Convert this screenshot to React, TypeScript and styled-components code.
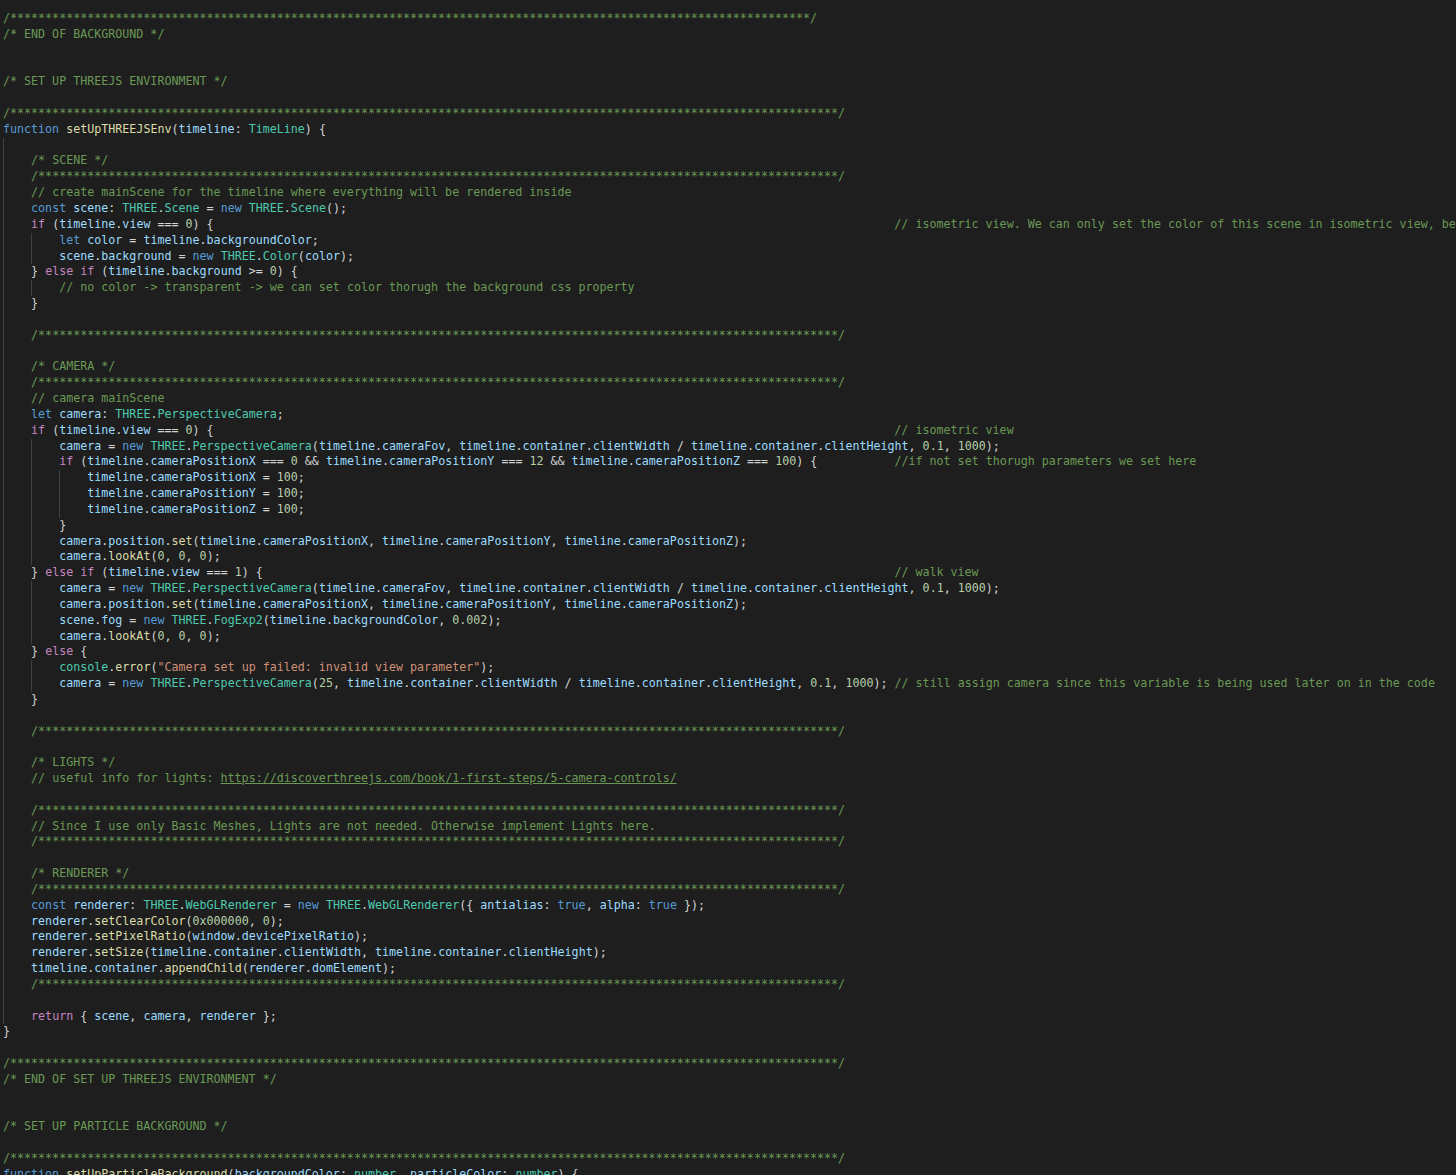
import { Fragment } from 'react';
import styled, { createGlobalStyle } from 'styled-components';

const GlobalStyle = createGlobalStyle`
  html, body {
    margin: 0;
    padding: 0;
    background: #1e1e1e;
  }
  body {
    overflow: hidden;
  }
`;

const colors: Record<string, string> = {
  c: '#6a9955',
  k: '#569cd6',
  f: '#c586c0',
  v: '#9cdcfe',
  m: '#dcdcaa',
  t: '#4ec9b0',
  n: '#b5cea8',
  s: '#ce9178',
};

const stars = (n: number) => '‹c|/' + '*'.repeat(n - 2) + '/›';
const COMMENT_COL = 127;

// each entry: guide depth, then the code. ‹x|text› picks a colour, ~ pads up to the side comments
const source: [number, string][] = [
  [0, stars(116)],
  [0, '‹c|/* END OF BACKGROUND */›'],
  [0, ''],
  [0, ''],
  [0, '‹c|/* SET UP THREEJS ENVIRONMENT */›'],
  [0, ''],
  [0, stars(120)],
  [0, '‹k|function› ‹m|setUpTHREEJSEnv›(‹v|timeline›: ‹t|TimeLine›) {'],
  [1, ''],
  [1, '‹c|/* SCENE */›'],
  [1, stars(116)],
  [1, '‹c|// create mainScene for the timeline where everything will be rendered inside›'],
  [1, '‹k|const› ‹v|scene›: ‹t|THREE›.‹t|Scene› = ‹k|new› ‹t|THREE›.‹t|Scene›();'],
  [1, '‹f|if› (‹v|timeline›.‹v|view› === ‹n|0›) {~‹c|// isometric view. We can only set the color of this scene in isometric view, because in walk view the background is a css property›'],
  [2, '‹k|let› ‹v|color› = ‹v|timeline›.‹v|backgroundColor›;'],
  [2, '‹v|scene›.‹v|background› = ‹k|new› ‹t|THREE›.‹t|Color›(‹v|color›);'],
  [1, '} ‹f|else› ‹f|if› (‹v|timeline›.‹v|background› >= ‹n|0›) {'],
  [2, '‹c|// no color -> transparent -> we can set color thorugh the background css property›'],
  [1, '}'],
  [1, ''],
  [1, stars(116)],
  [1, ''],
  [1, '‹c|/* CAMERA */›'],
  [1, stars(116)],
  [1, '‹c|// camera mainScene›'],
  [1, '‹k|let› ‹v|camera›: ‹t|THREE›.‹t|PerspectiveCamera›;'],
  [1, '‹f|if› (‹v|timeline›.‹v|view› === ‹n|0›) {~‹c|// isometric view›'],
  [2, '‹v|camera› = ‹k|new› ‹t|THREE›.‹t|PerspectiveCamera›(‹v|timeline›.‹v|cameraFov›, ‹v|timeline›.‹v|container›.‹v|clientWidth› / ‹v|timeline›.‹v|container›.‹v|clientHeight›, ‹n|0.1›, ‹n|1000›);'],
  [2, '‹f|if› (‹v|timeline›.‹v|cameraPositionX› === ‹n|0› && ‹v|timeline›.‹v|cameraPositionY› === ‹n|12› && ‹v|timeline›.‹v|cameraPositionZ› === ‹n|100›) {~‹c|//if not set thorugh parameters we set here›'],
  [3, '‹v|timeline›.‹v|cameraPositionX› = ‹n|100›;'],
  [3, '‹v|timeline›.‹v|cameraPositionY› = ‹n|100›;'],
  [3, '‹v|timeline›.‹v|cameraPositionZ› = ‹n|100›;'],
  [2, '}'],
  [2, '‹v|camera›.‹v|position›.‹m|set›(‹v|timeline›.‹v|cameraPositionX›, ‹v|timeline›.‹v|cameraPositionY›, ‹v|timeline›.‹v|cameraPositionZ›);'],
  [2, '‹v|camera›.‹m|lookAt›(‹n|0›, ‹n|0›, ‹n|0›);'],
  [1, '} ‹f|else› ‹f|if› (‹v|timeline›.‹v|view› === ‹n|1›) {~‹c|// walk view›'],
  [2, '‹v|camera› = ‹k|new› ‹t|THREE›.‹t|PerspectiveCamera›(‹v|timeline›.‹v|cameraFov›, ‹v|timeline›.‹v|container›.‹v|clientWidth› / ‹v|timeline›.‹v|container›.‹v|clientHeight›, ‹n|0.1›, ‹n|1000›);'],
  [2, '‹v|camera›.‹v|position›.‹m|set›(‹v|timeline›.‹v|cameraPositionX›, ‹v|timeline›.‹v|cameraPositionY›, ‹v|timeline›.‹v|cameraPositionZ›);'],
  [2, '‹v|scene›.‹v|fog› = ‹k|new› ‹t|THREE›.‹t|FogExp2›(‹v|timeline›.‹v|backgroundColor›, ‹n|0.002›);'],
  [2, '‹v|camera›.‹m|lookAt›(‹n|0›, ‹n|0›, ‹n|0›);'],
  [1, '} ‹f|else› {'],
  [2, '‹t|console›.‹m|error›(‹s|"Camera set up failed: invalid view parameter"›);'],
  [2, '‹v|camera› = ‹k|new› ‹t|THREE›.‹t|PerspectiveCamera›(‹n|25›, ‹v|timeline›.‹v|container›.‹v|clientWidth› / ‹v|timeline›.‹v|container›.‹v|clientHeight›, ‹n|0.1›, ‹n|1000›); ‹c|// still assign camera since this variable is being used later on in the code›'],
  [1, '}'],
  [1, ''],
  [1, stars(116)],
  [1, ''],
  [1, '‹c|/* LIGHTS */›'],
  [1, '‹c|// useful info for lights: ›‹u|https://discoverthreejs.com/book/1-first-steps/5-camera-controls/›'],
  [1, ''],
  [1, stars(116)],
  [1, '‹c|// Since I use only Basic Meshes, Lights are not needed. Otherwise implement Lights here.›'],
  [1, stars(116)],
  [1, ''],
  [1, '‹c|/* RENDERER */›'],
  [1, stars(116)],
  [1, '‹k|const› ‹v|renderer›: ‹t|THREE›.‹t|WebGLRenderer› = ‹k|new› ‹t|THREE›.‹t|WebGLRenderer›({ ‹v|antialias›: ‹k|true›, ‹v|alpha›: ‹k|true› });'],
  [1, '‹v|renderer›.‹m|setClearColor›(‹n|0x000000›, ‹n|0›);'],
  [1, '‹v|renderer›.‹m|setPixelRatio›(‹v|window›.‹v|devicePixelRatio›);'],
  [1, '‹v|renderer›.‹m|setSize›(‹v|timeline›.‹v|container›.‹v|clientWidth›, ‹v|timeline›.‹v|container›.‹v|clientHeight›);'],
  [1, '‹v|timeline›.‹v|container›.‹m|appendChild›(‹v|renderer›.‹v|domElement›);'],
  [1, stars(116)],
  [1, ''],
  [1, '‹f|return› { ‹v|scene›, ‹v|camera›, ‹v|renderer› };'],
  [0, '}'],
  [0, ''],
  [0, stars(120)],
  [0, '‹c|/* END OF SET UP THREEJS ENVIRONMENT */›'],
  [0, ''],
  [0, ''],
  [0, '‹c|/* SET UP PARTICLE BACKGROUND */›'],
  [0, ''],
  [0, stars(120)],
  [0, '‹k|function› ‹m|setUpParticleBackground›(‹v|backgroundColor›: ‹t|number›, ‹v|particleColor›: ‹t|number›) {'],
];

const Editor = styled.div`
  height: 1175px;
  overflow: hidden;
  padding: 10.97px 0 0 3px;
  box-sizing: border-box;
  background: #1e1e1e;
  color: #d4d4d4;
  font-family: "DejaVu Sans Mono", monospace;
  font-size: 11.67px;
  line-height: 15.84px;
`;

const Line = styled.div`
  display: flex;
  height: 15.83px;
  white-space: pre;

  &:nth-child(2n) {
    height: 15.85px;
  }
`;

const Guide = styled.span`
  flex: none;
  width: 28.08px;
  box-sizing: border-box;
  border-left: 1px solid #404040;
`;

const Code = styled.span`
  white-space: pre;
`;

const Token = styled.span<{ $kind: string }>`
  color: ${p => colors[p.$kind]};
`;

const Link = styled.span`
  color: #6a9955;
  text-decoration: underline;
`;

const renderCode = (code: string, depth: number) => {
  const parts = code.split(/(‹[^›]*›|~)/).filter(Boolean);
  let col = depth * 4;
  return parts.map((part, i) => {
    if (part === '~') {
      const gap = ' '.repeat(COMMENT_COL - col);
      col = COMMENT_COL;
      return <Fragment key={i}>{gap}</Fragment>;
    }
    if (part.startsWith('‹')) {
      const kind = part[1];
      const text = part.slice(3, -1);
      col += text.length;
      if (kind === 'u') return <Link key={i}>{text}</Link>;
      return (
        <Token key={i} $kind={kind}>
          {text}
        </Token>
      );
    }
    col += part.length;
    return <Fragment key={i}>{part}</Fragment>;
  });
};

const App = () => {
  return (
    <Editor>
      <GlobalStyle />
      {source.map(([depth, code], i) => (
        <Line key={i}>
          {Array.from({ length: depth }, (_, g) => (
            <Guide key={g} />
          ))}
          <Code>{renderCode(code, depth)}</Code>
        </Line>
      ))}
    </Editor>
  );
};

export default App;
